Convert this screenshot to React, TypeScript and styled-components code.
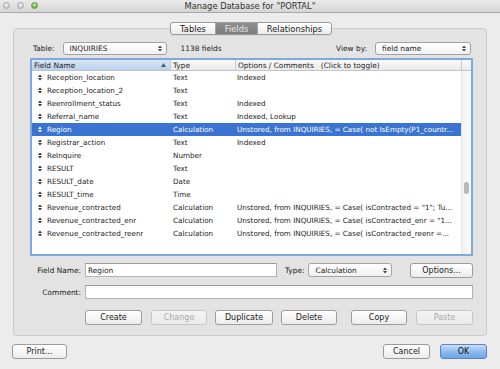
import React from "react";
import styled, { createGlobalStyle, css } from "styled-components";

const Global = createGlobalStyle`
  html, body { margin: 0; padding: 0; background: #ececec; }
  body { font-family: "DejaVu Sans", "Liberation Sans", sans-serif; font-size: 7.4px; color: #1a1a1a; }
  * { box-sizing: border-box; }
`;

const Window = styled.div`
  width: 500px;
  height: 369px;
  background: #ececec;
  display: flex;
  flex-direction: column;
  overflow: hidden;
`;

const TitleBar = styled.div`
  height: 13px;
  position: relative;
  display: flex;
  align-items: center;
  justify-content: center;
  background: linear-gradient(#eaeaea, #d6d6d6);
  border-bottom: 1px solid #a8a8a8;
  font-size: 8.3px;
  color: #333;
`;

const Lights = styled.div`
  position: absolute;
  left: 3px;
  top: 2px;
  display: flex;
  gap: 7px;
`;

const Light = styled.span<{ $green?: boolean }>`
  width: 7px;
  height: 7px;
  border-radius: 50%;
  border: 1px solid ${(p) => (p.$green ? "#5e9d42" : "#a9a9a9")};
  background: ${(p) =>
    p.$green
      ? "radial-gradient(circle at 50% 35%, #c7f0a6, #71c04c 60%, #4f9c34)"
      : "radial-gradient(circle at 50% 35%, #f4f4f4, #cfcfcf 60%, #b5b5b5)"};
`;

const TabRow = styled.div`
  display: flex;
  justify-content: center;
  margin-top: 9px;
  margin-bottom: -7px;
  position: relative;
  z-index: 1;
  padding-left: 2px;
`;

const Tabs = styled.div`
  display: flex;
  height: 13px;
  border: 1px solid #9a9a9a;
  border-radius: 3px;
  overflow: hidden;
  background: linear-gradient(#ffffff, #ececec);
  box-shadow: 0 1px 0 rgba(0, 0, 0, 0.05);
`;

const Tab = styled.div<{ $w: number; $on?: boolean }>`
  width: ${(p) => p.$w}px;
  display: flex;
  align-items: center;
  justify-content: center;
  font-size: 8.3px;
  border-left: 1px solid #a5a5a5;
  &:first-child { border-left: none; }
  ${(p) =>
    p.$on &&
    css`
      background: linear-gradient(#8f8f8f, #7c7c7c);
      color: #e8e8e8;
    `}
`;

const Group = styled.div`
  margin: 0 13px;
  height: 308px;
  background: #e3e3e3;
  border: 1px solid #cbcbcb;
  border-radius: 4px;
  padding: 13px 13px 0 16px;
  display: flex;
  flex-direction: column;
`;

const Toolbar = styled.div`
  height: 12px;
  display: flex;
  align-items: center;
`;

const Label = styled.span<{ $ml?: number }>`
  margin-left: ${(p) => p.$ml ?? 0}px;
  white-space: nowrap;
`;

const Select = styled.div<{ $w: number; $ml?: number; $h?: number }>`
  width: ${(p) => p.$w}px;
  height: ${(p) => p.$h ?? 13}px;
  margin-left: ${(p) => p.$ml ?? 0}px;
  background: linear-gradient(#ffffff, #f1f1f1);
  border: 1px solid #a3a3a3;
  border-radius: 3px;
  display: flex;
  align-items: center;
  justify-content: space-between;
  padding: 0 4px 0 6px;
`;

const Arrows = () => (
  <svg width="4" height="7" viewBox="0 0 4 7">
    <path d="M0 3 L2 0.5 L4 3 Z M0 4 L2 6.5 L4 4 Z" fill="#444" />
  </svg>
);

const ListBox = styled.div`
  margin-top: 4px;
  height: 198px;
  border: 2px solid #7fa9dc;
  background: #fff;
  display: flex;
  flex-direction: column;
`;

const HeaderRow = styled.div`
  height: 11px;
  display: grid;
  grid-template-columns: 138px 65px 1fr 10px;
  border-bottom: 1px solid #c4c4c4;
  background: linear-gradient(#fbfbfb, #e9e9e9);
`;

const HeaderCell = styled.div<{ $active?: boolean }>`
  display: flex;
  align-items: center;
  justify-content: space-between;
  padding: 0 4px 0 2px;
  border-left: 1px solid #c9c9c9;
  white-space: nowrap;
  overflow: hidden;
  &:first-child { border-left: none; }
  ${(p) =>
    p.$active &&
    css`
      background: linear-gradient(#d9e7f6, #b9d1ec);
    `}
`;

const Body = styled.div`
  flex: 1;
  display: flex;
  min-height: 0;
`;

const Rows = styled.div`
  flex: 1;
  display: flex;
  flex-direction: column;
`;

const Row = styled.div<{ $sel?: boolean }>`
  height: 13px;
  display: grid;
  grid-template-columns: 138px 65px 1fr;
  align-items: center;
  white-space: nowrap;
  ${(p) =>
    p.$sel &&
    css`
      background: #3a74d0;
      color: #fff;
    `}
`;

const NameCell = styled.div`
  display: flex;
  align-items: center;
  overflow: hidden;
`;

const Handle = styled.span`
  width: 15px;
  display: flex;
  justify-content: center;
  padding-left: 1px;
`;

const Cell = styled.div<{ $pl?: number }>`
  padding-left: ${(p) => p.$pl ?? 3}px;
  font-size: 7.2px;
  overflow: hidden;
`;

const ScrollTrack = styled.div`
  width: 10px;
  background: linear-gradient(90deg, #f2f2f2, #fafafa);
  border-left: 1px solid #e6e6e6;
  position: relative;
`;

const Thumb = styled.div`
  position: absolute;
  left: 2px;
  top: 111px;
  width: 5px;
  height: 12px;
  border-radius: 3px;
  background: #b8b8b8;
`;

const Form = styled.div`
  margin-top: 7px;
  display: flex;
  flex-direction: column;
  gap: 8px;
`;

const FormRow = styled.div`
  display: flex;
  align-items: center;
  height: 14px;
`;

const FormLabel = styled.div`
  width: 51px;
  text-align: right;
  margin-right: 4px;
  white-space: nowrap;
`;

const Input = styled.div<{ $w?: number }>`
  ${(p) => (p.$w ? `width: ${p.$w}px;` : "flex: 1;")}
  height: 14px;
  background: #fff;
  border: 1px solid #b3b3b3;
  border-top-color: #9b9b9b;
  display: flex;
  align-items: center;
  padding-left: 2px;
`;

const Button = styled.div<{ $w: number; $ml?: number; $disabled?: boolean; $primary?: boolean }>`
  width: ${(p) => p.$w}px;
  margin-left: ${(p) => p.$ml ?? 0}px;
  height: 15px;
  border: 1px solid #9b9b9b;
  border-radius: 3px;
  background: linear-gradient(#ffffff, #ececec);
  display: flex;
  align-items: center;
  justify-content: center;
  font-size: 8px;
  white-space: nowrap;
  ${(p) =>
    p.$disabled &&
    css`
      color: #a9a9a9;
      border-color: #c6c6c6;
      background: linear-gradient(#f4f4f4, #ebebeb);
    `}
  ${(p) =>
    p.$primary &&
    css`
      border-color: #5b86bd;
      background: linear-gradient(#c6ddf6, #8fbcee 50%, #6fa6e6);
      color: #111;
    `}
`;

const ButtonRow = styled.div`
  display: flex;
  align-items: center;
  margin-top: 11px;
  padding-left: 55px;
`;

const Footer = styled.div`
  display: flex;
  align-items: center;
  margin-top: 8px;
  padding: 0 13px 0 12px;
`;

const Spacer = styled.div<{ $fixed?: number }>`
  flex: ${(p) => (p.$fixed !== undefined ? `0 0 ${p.$fixed}px` : "1")};
`;

const HandleIcon = ({ color }: { color: string }) => (
  <svg width="4" height="7" viewBox="0 0 4 7">
    <path d="M0 3 L2 0.5 L4 3 Z M0 4 L2 6.5 L4 4 Z" fill={color} />
  </svg>
);

const rows: [string, string, string][] = [
  ["Reception_location", "Text", "Indexed"],
  ["Reception_location_2", "Text", ""],
  ["Reenrollment_status", "Text", "Indexed"],
  ["Referral_name", "Text", "Indexed, Lookup"],
  ["Region", "Calculation", "Unstored, from INQUIRIES, = Case( not IsEmpty(P1_countr..."],
  ["Registrar_action", "Text", "Indexed"],
  ["ReInquire", "Number", ""],
  ["RESULT", "Text", ""],
  ["RESULT_date", "Date", ""],
  ["RESULT_time", "Time", ""],
  ["Revenue_contracted", "Calculation", "Unstored, from INQUIRIES, = Case( isContracted = \"1\"; Tu..."],
  ["Revenue_contracted_enr", "Calculation", "Unstored, from INQUIRIES, = Case( isContracted_enr = \"1..."],
  ["Revenue_contracted_reenr", "Calculation", "Unstored, from INQUIRIES, = Case( isContracted_reenr =..."],
];

export default function App() {
  return (
    <Window>
      <Global />
      <TitleBar>
        <Lights>
          <Light />
          <Light />
          <Light $green />
        </Lights>
        Manage Database for "PORTAL"
      </TitleBar>
      <TabRow>
        <Tabs>
          <Tab $w={44}>Tables</Tab>
          <Tab $w={42} $on>
            Fields
          </Tab>
          <Tab $w={74}>Relationships</Tab>
        </Tabs>
      </TabRow>
      <Group>
        <Toolbar>
          <Label $ml={3}>Table:</Label>
          <Select $w={104} $ml={8}>
            <span>INQUIRIES</span>
            <Arrows />
          </Select>
          <Label $ml={14}>1138 fields</Label>
          <Spacer />
          <Label>View by:</Label>
          <Select $w={96} $ml={8}>
            <span>field name</span>
            <Arrows />
          </Select>
          <Spacer $fixed={2} />
        </Toolbar>
        <ListBox>
          <HeaderRow>
            <HeaderCell $active>
              <span>Field Name</span>
              <svg width="5" height="4" viewBox="0 0 5 4">
                <path d="M0 4 L2.5 0 L5 4 Z" fill="#4a5a70" />
              </svg>
            </HeaderCell>
            <HeaderCell>
              <span>Type</span>
            </HeaderCell>
            <HeaderCell>
              <span>Options / Comments &nbsp;&nbsp;(Click to toggle)</span>
            </HeaderCell>
            <HeaderCell />
          </HeaderRow>
          <Body>
            <Rows>
              {rows.map(([n, t, o], i) => (
                <Row key={n} $sel={i === 4}>
                  <NameCell>
                    <Handle>
                      <HandleIcon color={i === 4 ? "#fff" : "#333"} />
                    </Handle>
                    <Cell $pl={0}>{n}</Cell>
                  </NameCell>
                  <Cell>{t}</Cell>
                  <Cell $pl={2}>{o}</Cell>
                </Row>
              ))}
            </Rows>
            <ScrollTrack>
              <Thumb />
            </ScrollTrack>
          </Body>
        </ListBox>
        <Form>
          <FormRow>
            <FormLabel>Field Name:</FormLabel>
            <Input $w={192}>Region</Input>
            <Label $ml={8}>Type:</Label>
            <Select $w={84} $ml={4} $h={14}>
              <span>Calculation</span>
              <Arrows />
            </Select>
            <Spacer />
            <Button $w={63}>Options...</Button>
          </FormRow>
          <FormRow>
            <FormLabel>Comment:</FormLabel>
            <Input />
          </FormRow>
        </Form>
        <ButtonRow>
          <Button $w={57}>Create</Button>
          <Button $w={56} $ml={9} $disabled>
            Change
          </Button>
          <Button $w={58} $ml={8}>
            Duplicate
          </Button>
          <Button $w={56} $ml={8}>
            Delete
          </Button>
          <Button $w={56} $ml={14}>
            Copy
          </Button>
          <Button $w={57} $ml={9} $disabled>
            Paste
          </Button>
        </ButtonRow>
      </Group>
      <Footer>
        <Button $w={55}>Print...</Button>
        <Spacer />
        <Button $w={47}>Cancel</Button>
        <Button $w={47} $ml={10} $primary>
          OK
        </Button>
      </Footer>
    </Window>
  );
}
